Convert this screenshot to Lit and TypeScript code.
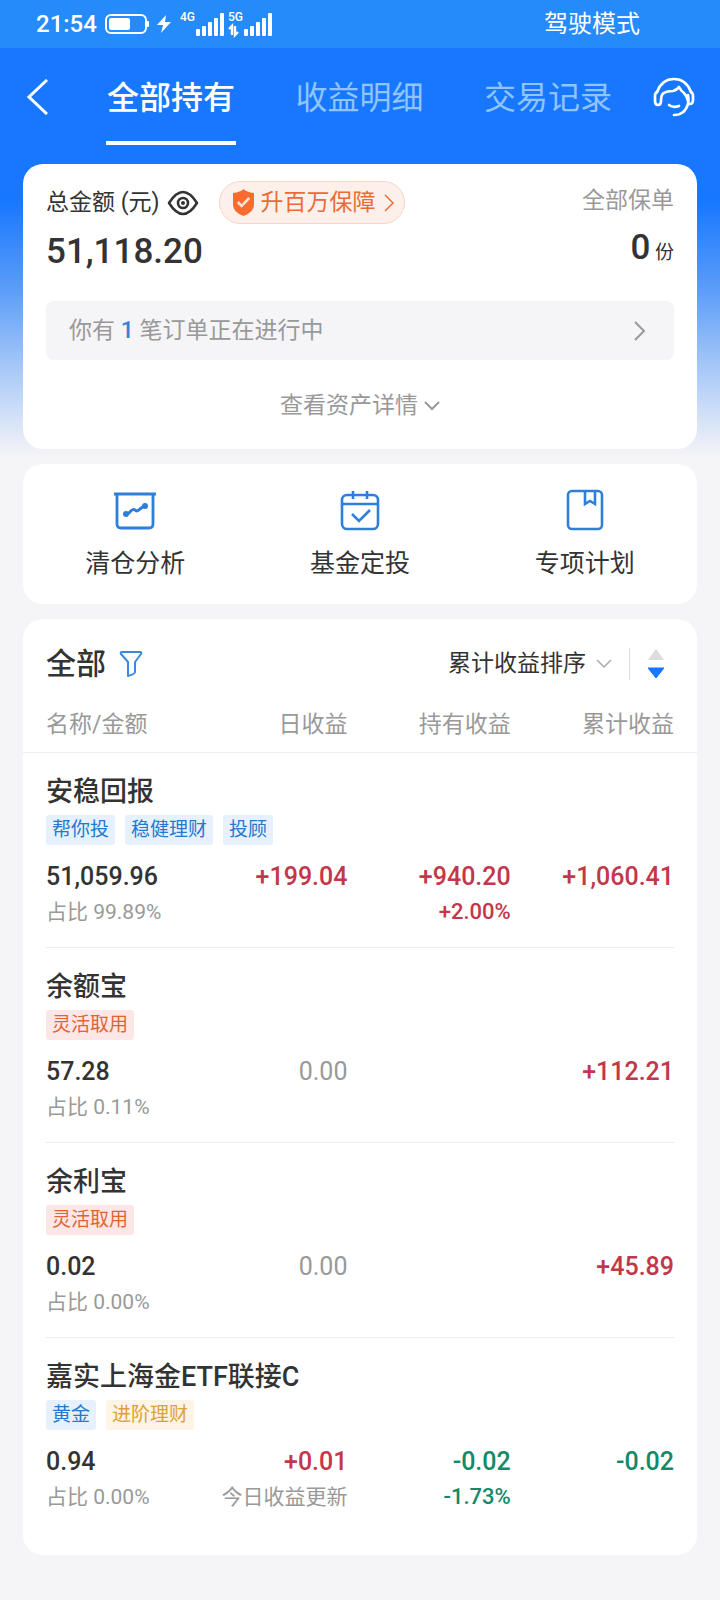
import { LitElement, html, css, svg, nothing } from "lit";
import { customElement, property, state } from "lit/decorators.js";

type Tone = "up" | "down" | "flat";
type TagKind = "blue" | "orange" | "gold";

interface Figure {
  value: string;
  tone: Tone;
  note?: string;
  noteTone?: Tone;
}

interface Fund {
  name: string;
  tags: { text: string; kind: TagKind }[];
  amount: string;
  share: string;
  day: Figure;
  hold?: Figure;
  total: Figure;
}

const FUNDS: Fund[] = [
  {
    name: "安稳回报",
    tags: [
      { text: "帮你投", kind: "blue" },
      { text: "稳健理财", kind: "blue" },
      { text: "投顾", kind: "blue" },
    ],
    amount: "51,059.96",
    share: "占比 99.89%",
    day: { value: "+199.04", tone: "up" },
    hold: { value: "+940.20", tone: "up", note: "+2.00%", noteTone: "up" },
    total: { value: "+1,060.41", tone: "up" },
  },
  {
    name: "余额宝",
    tags: [{ text: "灵活取用", kind: "orange" }],
    amount: "57.28",
    share: "占比 0.11%",
    day: { value: "0.00", tone: "flat" },
    total: { value: "+112.21", tone: "up" },
  },
  {
    name: "余利宝",
    tags: [{ text: "灵活取用", kind: "orange" }],
    amount: "0.02",
    share: "占比 0.00%",
    day: { value: "0.00", tone: "flat" },
    total: { value: "+45.89", tone: "up" },
  },
  {
    name: "嘉实上海金ETF联接C",
    tags: [
      { text: "黄金", kind: "blue" },
      { text: "进阶理财", kind: "gold" },
    ],
    amount: "0.94",
    share: "占比 0.00%",
    day: { value: "+0.01", tone: "up", note: "今日收益更新", noteTone: "flat" },
    hold: { value: "-0.02", tone: "down", note: "-1.73%", noteTone: "down" },
    total: { value: "-0.02", tone: "down" },
  },
];

const reset = css`
  * { box-sizing: border-box; }
  button {
    margin: 0;
    padding: 0;
    border: 0;
    background: none;
    font: inherit;
    color: inherit;
    cursor: pointer;
  }
  svg { display: block; flex: none; fill: none; }
`;

@customElement("phone-status")
export class PhoneStatus extends LitElement {
  static styles = [reset, css`
    :host {
      display: flex;
      align-items: center;
      justify-content: space-between;
      height: 48px;
      padding: 0 80px 0 36px;
      background: #268bfa;
      color: #fff;
    }
    .left { display: flex; align-items: center; gap: 8px; }
    .time { font-size: 24px; font-weight: 500; line-height: 32px; }
    .mode { font-size: 24px; font-weight: 400; line-height: 32px; }
    .net { font: 500 12px Roboto, sans-serif; fill: #fff; }
  `];

  private bars(x: number) {
    return [0, 1, 2, 3, 4].map((i) => {
      const h = [7, 10, 14, 18, 23][i];
      return svg`<rect x=${x + i * 6} y=${28 - h} width="4" height=${h} rx="1" fill="#fff"/>`;
    });
  }

  render() {
    return html`
      <div class="left">
        <span class="time">21:54</span>
        <svg width="44" height="20" viewBox="0 0 44 20" aria-label="电量">
          <rect x="1" y="1" width="40" height="18" rx="5" stroke="#fff" stroke-width="2"/>
          <rect x="4" y="4" width="21" height="12" rx="2" fill="#fff"/>
          <path d="M42 7h1q1 0 1 1v4q0 1-1 1h-1z" fill="#fff"/>
        </svg>
        <svg width="14" height="18" viewBox="0 0 14 18" aria-hidden="true">
          <path d="M9 0 0 10h6L4 18 14 7H8z" fill="#fff"/>
        </svg>
        <svg width="96" height="32" viewBox="0 0 96 32" aria-label="信号">
          <text class="net" x="1" y="13">4G</text>
          ${this.bars(17)}
          <text class="net" x="49" y="13">5G</text>
          <path d="M50 21l3-3v9M56 18v9l3-3" stroke="#fff" stroke-width="2.4"/>
          ${this.bars(65)}
        </svg>
      </div>
      <span class="mode">驾驶模式</span>
    `;
  }
}

@customElement("page-nav")
export class PageNav extends LitElement {
  @state() private current = 0;

  static styles = [reset, css`
    :host {
      display: flex;
      justify-content: space-between;
      padding: 0 25px 0 26px;
      color: #fff;
    }
    .icon { display: flex; align-items: center; height: 97px; }
    .tabs { display: flex; justify-content: space-between; flex: 1; margin: 0 40px 0 58px; }
    .tab {
      height: 97px;
      padding: 6px 1px 0;
      border-bottom: 4px solid transparent;
      font-size: 32px;
      line-height: 48px;
      color: #8fc4ff;
    }
    .tab.on {
      color: #fff;
      font-weight: 500;
      border-image: linear-gradient(#fff, #fff) 1;
    }
  `];

  render() {
    const tabs = ["全部持有", "收益明细", "交易记录"];
    return html`
      <button class="icon" aria-label="返回">
        <svg width="22" height="36" viewBox="0 0 22 36">
          <path d="M21 1 3 18l18 17" stroke="#fff" stroke-width="3"/>
        </svg>
      </button>
      <div class="tabs" role="tablist">
        ${tabs.map((t, i) => html`
          <button class="tab ${i === this.current ? "on" : ""}" role="tab"
            aria-selected=${i === this.current} @click=${() => (this.current = i)}>${t}</button>`)}
      </div>
      <button class="icon" aria-label="客服">
        <svg width="42" height="40" viewBox="0 0 42 40" stroke="#fff" stroke-width="2.7" stroke-linecap="round" stroke-linejoin="round">
          <path d="M4 15C7 7 13 2 21 2s14 5 17 13"/>
          <path d="M4 15q-2 1-2 4v5q0 4 3 4t3-4q0-7 3-8 3-2 9-2 4-1 6-4 2 4 5 6 3 3 4 8"/>
          <path d="M38 15q2 1 2 4v4q0 4-3 4h-2q1-4 0-9"/>
          <path d="M35 27c-2 7-7 11-14 11"/>
          <path d="M16 28q4 3 10 1"/>
        </svg>
      </button>
    `;
  }
}

@customElement("asset-card")
export class AssetCard extends LitElement {
  static styles = [reset, css`
    :host {
      display: block;
      padding: 17px 23px 27px;
      border-radius: 20px;
      background: #fff;
      color: #333;
    }
    .top { display: flex; justify-content: space-between; }
    .line { display: flex; align-items: center; height: 43px; }
    .label { font-size: 23px; line-height: 32px; margin-right: 7px; }
    .pill {
      display: flex;
      align-items: center;
      height: 43px;
      margin-left: 20px;
      padding: 0 10px 0 13px;
      border: 1px solid #f8d4c6;
      border-radius: 22px;
      background: #fdf0ea;
      color: #ec6b33;
      font-size: 23px;
      line-height: 32px;
    }
    .pill span { margin: 0 8px 0 7px; }
    .sum { font-size: 35px; font-weight: 500; line-height: 56px; }
    .policy { text-align: right; }
    .policy .label { display: block; margin: 4px 0 0; color: #999; }
    .policy .count { line-height: 62px; font-size: 19px; }
    .policy strong { font-size: 35px; font-weight: 500; }
    .order {
      display: flex;
      align-items: center;
      justify-content: space-between;
      width: 100%;
      height: 59px;
      margin-top: 17px;
      padding: 0 28px 0 23px;
      border-radius: 8px;
      background: #f5f4f6;
      color: #999;
      font-size: 23px;
      line-height: 32px;
    }
    .order b { font-weight: 500; color: #3481d6; }
    .more {
      display: flex;
      align-items: center;
      gap: 6px;
      margin: 30px auto 0;
      color: #999;
      font-size: 23px;
      line-height: 32px;
    }
  `];

  render() {
    return html`
      <div class="top">
        <div>
          <div class="line">
            <span class="label">总金额 (元)</span>
            <button aria-label="隐藏金额">
              <svg width="32" height="26" viewBox="0 0 32 26" stroke="#333">
                <path d="M2 13Q9 2 16 2t14 11q-7 11-14 11T2 13z" stroke-width="2.6" stroke-linejoin="round"/>
                <circle cx="16" cy="13" r="5" stroke-width="2.6"/>
                <circle cx="16" cy="13" r="2" fill="#333" stroke="none"/>
              </svg>
            </button>
            <button class="pill">
              <svg width="21" height="27" viewBox="0 0 22 27" preserveAspectRatio="none">
                <path d="M11 0q3 3 11 4v12q0 7-11 11Q0 23 0 16V4q8-1 11-4z" fill="#f96a2f"/>
                <path d="m5 13 4 4 8-8" stroke="#fde0d3" stroke-width="2.6"/>
              </svg>
              <span>升百万保障</span>
              <svg width="10" height="18" viewBox="0 0 10 18">
                <path d="m1 1 8 8-8 8" stroke="#ec6b33" stroke-width="1.5"/>
              </svg>
            </button>
          </div>
          <div class="sum">51,118.20</div>
        </div>
        <div class="policy">
          <span class="label">全部保单</span>
          <div class="count"><strong>0</strong> 份</div>
        </div>
      </div>
      <button class="order">
        <span>你有 <b>1</b> 笔订单正在进行中</span>
        <svg width="12" height="20" viewBox="0 0 12 20">
          <path d="m1 1 9 9-9 9" stroke="#999" stroke-width="2"/>
        </svg>
      </button>
      <button class="more">
        查看资产详情
        <svg width="16" height="10" viewBox="0 0 16 10">
          <path d="m1 1 7 7 7-7" stroke="#999" stroke-width="2"/>
        </svg>
      </button>
    `;
  }
}

@customElement("quick-actions")
export class QuickActions extends LitElement {
  static styles = [reset, css`
    :host {
      display: grid;
      grid-template-columns: repeat(3, 1fr);
      padding: 24px 0 22px;
      border-radius: 20px;
      background: #fff;
      color: #333;
    }
    .item {
      display: flex;
      flex-direction: column;
      align-items: center;
      gap: 14px;
      font-size: 25px;
      line-height: 36px;
    }
  `];

  render() {
    return html`
      <button class="item">
        <svg width="44" height="44" viewBox="0 0 44 44" stroke="#2e7fd9" stroke-width="2.8">
          <path d="M1 6h42"/>
          <path d="M4 6v30q0 4 4 4h28q4 0 4-4V6"/>
          <path d="m13 26 3-1q4-5 6-3t5-1l4-3" stroke-width="3"/>
          <circle cx="13" cy="26" r="3" fill="#2e7fd9" stroke="none"/>
          <circle cx="32" cy="18" r="3" fill="#2e7fd9" stroke="none"/>
        </svg>
        清仓分析
      </button>
      <button class="item">
        <svg width="44" height="44" viewBox="0 0 44 44" stroke="#2e7fd9" stroke-width="2.6">
          <rect x="4" y="7" width="36" height="34" rx="5"/>
          <path d="M4 16h36M15 3v8M29 3v8"/>
          <path d="m14 26 7 7 11-11"/>
        </svg>
        基金定投
      </button>
      <button class="item">
        <svg width="44" height="44" viewBox="0 0 44 44" stroke="#2e7fd9" stroke-width="2.6">
          <rect x="5" y="3" width="34" height="38" rx="4"/>
          <path d="M22 3v13l5-3 5 3V3"/>
        </svg>
        专项计划
      </button>
    `;
  }
}

@customElement("fund-list")
export class FundList extends LitElement {
  @property({ attribute: false }) funds: Fund[] = [];

  static styles = [reset, css`
    :host {
      display: block;
      padding: 23px 23px 22px;
      border-radius: 20px;
      background: #fff;
      color: #333;
    }
    .bar { display: flex; align-items: center; justify-content: space-between; height: 44px; }
    .filter { display: flex; align-items: center; gap: 13px; font-size: 30px; font-weight: 500; line-height: 44px; }
    .sort { display: flex; align-items: center; font-size: 23px; line-height: 32px; }
    .menu { display: flex; align-items: center; gap: 10px; }
    .order { padding: 0 9px 0 17px; margin-left: 17px; border-left: 1px solid #ddd; }
    table { width: 100%; table-layout: fixed; border-collapse: separate; border-spacing: 0; }
    .c-num { width: 26%; }
    th, td { padding: 0; text-align: right; vertical-align: top; font-weight: 400; }
    thead th {
      position: relative;
      height: 67px;
      padding-top: 23px;
      font-size: 23px;
      line-height: 32px;
      color: #999;
    }
    thead th::after {
      content: "";
      position: absolute;
      left: -23px;
      right: -23px;
      bottom: 0;
      height: 1px;
      background: #eee;
    }
    th:first-child, td:first-child { text-align: left; }
    .name { padding-top: 19px; font-size: 27px; font-weight: 500; line-height: 40px; }
    .tags { display: flex; gap: 10px; margin-top: 3px; }
    .tag { padding: 0 6px; border-radius: 3px; font-size: 19px; font-weight: 400; line-height: 30px; }
    .blue { background: #e7f1fd; color: #2579cc; }
    .orange { background: #fde6e6; color: #dd6534; }
    .gold { background: #fdf4e6; color: #e0a02f; }
    .nums td { height: 103px; padding-top: 16px; }
    tbody:not(:last-child) .nums td { border-bottom: 1px solid #ebebeb; }
    .value { font-size: 25px; font-weight: 500; line-height: 32px; }
    .note { margin-top: 3px; font-size: 21px; line-height: 32px; color: #999; white-space: nowrap; }
    .note.up, .note.down { font-size: 22px; font-weight: 500; }
    .up { color: #c4364a; }
    .down { color: #128a68; }
    .value.flat { color: #999; font-weight: 400; }
  `];

  private figure(f?: Figure) {
    if (!f) return nothing;
    return html`
      <div class="value ${f.tone}">${f.value}</div>
      ${f.note ? html`<div class="note ${f.noteTone}">${f.note}</div>` : nothing}
    `;
  }

  render() {
    return html`
      <div class="bar">
        <button class="filter">
          全部
          <svg width="24" height="28" viewBox="0 0 24 28">
            <path d="M3 2h18q2 0 1 2l-6 8v10q0 2-7 4V12L2 4Q1 2 3 2z" stroke="#3a8ae0" stroke-width="2" stroke-linejoin="round"/>
          </svg>
        </button>
        <div class="sort">
          <button class="menu">
            累计收益排序
            <svg width="16" height="10" viewBox="0 0 16 10">
              <path d="m1 1 7 7 7-7" stroke="#aaa" stroke-width="1.5"/>
            </svg>
          </button>
          <button class="order" aria-label="降序">
            <svg width="18" height="32" viewBox="0 0 18 32">
              <path d="M9 1 1 12h16z" fill="#dcdcdc"/>
              <path d="M9 30 1 20h16z" fill="#1777ff" stroke="#1777ff" stroke-linejoin="round"/>
            </svg>
          </button>
        </div>
      </div>
      <table>
        <colgroup><col><col class="c-num"><col class="c-num"><col class="c-num"></colgroup>
        <thead>
          <tr>
            <th scope="col">名称/金额</th>
            <th scope="col">日收益</th>
            <th scope="col">持有收益</th>
            <th scope="col">累计收益</th>
          </tr>
        </thead>
        ${this.funds.map((f) => html`
          <tbody>
            <tr>
              <th colspan="4" scope="rowgroup">
                <div class="name">${f.name}</div>
                <div class="tags">
                  ${f.tags.map((t) => html`<span class="tag ${t.kind}">${t.text}</span>`)}
                </div>
              </th>
            </tr>
            <tr class="nums">
              <td>
                <div class="value">${f.amount}</div>
                <div class="note">${f.share}</div>
              </td>
              <td>${this.figure(f.day)}</td>
              <td>${this.figure(f.hold)}</td>
              <td>${this.figure(f.total)}</td>
            </tr>
          </tbody>`)}
      </table>
    `;
  }
}

@customElement("app-root")
export class AppRoot extends LitElement {
  static styles = css`
    :host {
      display: block;
      min-height: 100vh;
      background: linear-gradient(#1777ff 200px, #5c9df8 290px, #a9c9f8 370px, #f5f4f7 456px) #f5f4f7;
      font-family: Roboto, "Noto Sans CJK SC", sans-serif;
    }
    main {
      display: flex;
      flex-direction: column;
      gap: 15px;
      padding: 19px 23px 46px;
    }
  `;

  render() {
    return html`
      <phone-status></phone-status>
      <page-nav></page-nav>
      <main>
        <asset-card></asset-card>
        <quick-actions></quick-actions>
        <fund-list .funds=${FUNDS}></fund-list>
      </main>
    `;
  }
}
